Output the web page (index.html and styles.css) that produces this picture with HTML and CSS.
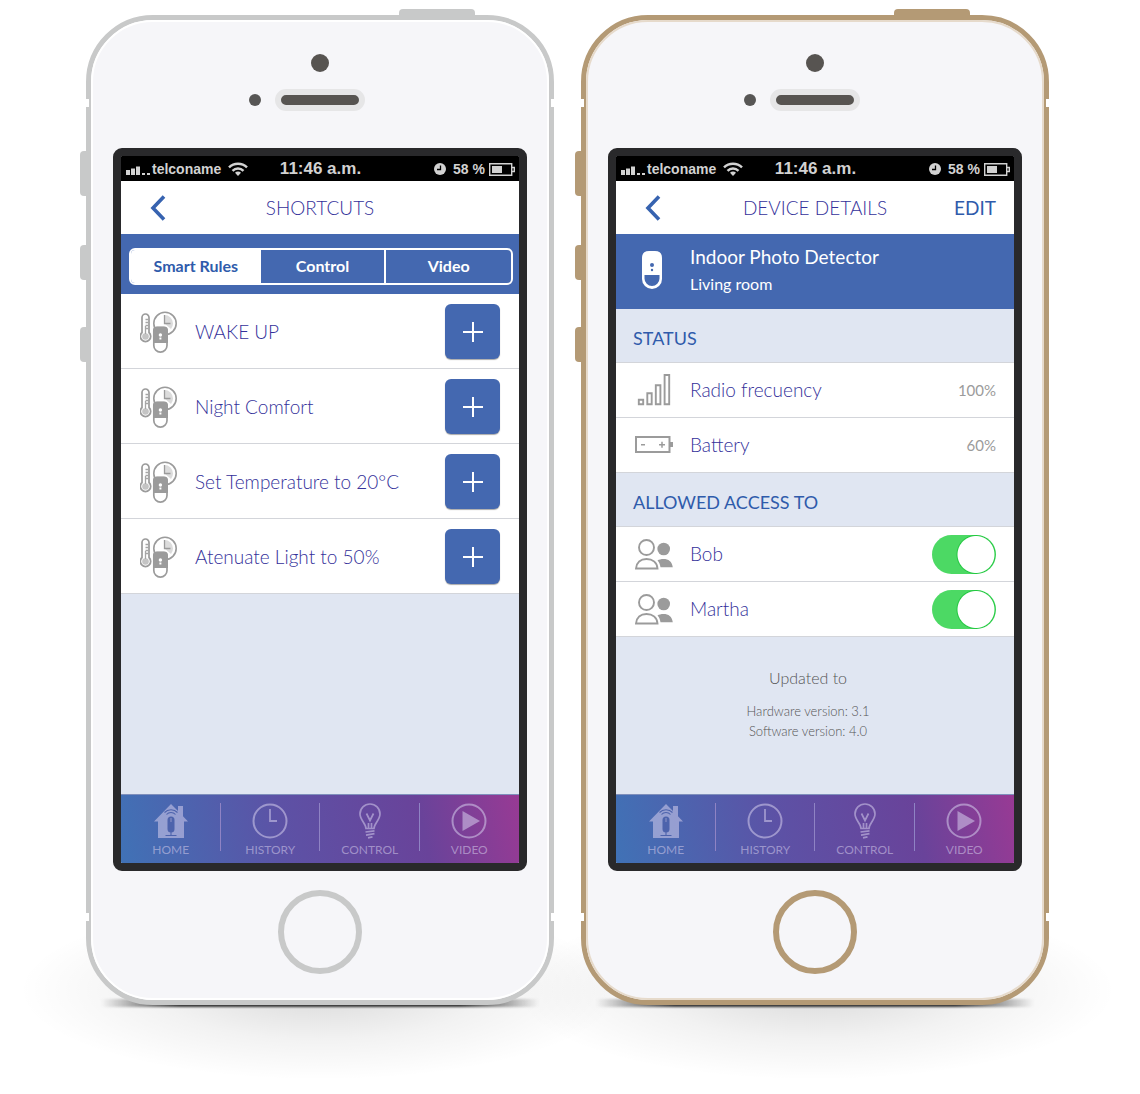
FILE: index.html
```html
<!DOCTYPE html>
<html lang="en">
<head>
<meta charset="utf-8">
<meta name="viewport" content="width=device-width, initial-scale=1">
<title>Smart home app</title>
<link rel="stylesheet" href="styles.css">
</head>
<body>
<svg class="sprite" width="0" height="0" aria-hidden="true">
  <symbol id="i-signal" viewBox="0 0 24 11">
    <path d="M0 6h4v5H0zM5 4.500h4V11H5zM10 2.500h4V11h-4zM16 9h3v2h-3zM21 9h3v2h-3z" fill="currentColor"/>
  </symbol>
  <symbol id="i-wifi" viewBox="0 0 20 14">
    <g fill="none" stroke="currentColor" stroke-width="2.500"><path d="M1 5.300a13 13 0 0 1 18 0"/><path d="M4.500 8.800a8 8 0 0 1 11 0"/></g>
    <path d="M10 14l-3-3.200a4.200 4.200 0 0 1 6 0z" fill="currentColor"/>
  </symbol>
  <symbol id="i-alarm" viewBox="0 0 12 12">
    <circle cx="6" cy="6" r="6" fill="currentColor"/><path d="M6.500 2.500v4H3" fill="none" stroke="#000" stroke-width="1.300"/>
  </symbol>
  <symbol id="i-charge" viewBox="0 0 26 13">
    <path d="M.7.700h22v11.600H.7zM23 4.500h2.300v4H23" fill="none" stroke="currentColor" stroke-width="1.400"/><path d="M3 3h10v7H3z" fill="currentColor"/>
  </symbol>
  <symbol id="i-back" viewBox="0 0 16 26">
    <path d="M14 1.500L3 13l11 11.500" fill="none" stroke="currentColor" stroke-width="3.600"/>
  </symbol>
  <symbol id="i-rule" viewBox="0 0 38 42">
    <circle cx="25" cy="12.500" r="11.200" fill="#fff" stroke="#9b9b9b" stroke-width="1.600"/>
    <path d="M24.500 4a8.500 8.500 0 0 1 8.500 8.500 8.500 8.500 0 0 1-2 5.500L24.500 12.500z" fill="#dcdcdc"/>
    <path d="M24.500 4v8.500h6" fill="none" stroke="#9b9b9b" stroke-width="1.300"/>
    <path d="M2 21.500V6.500a3.500 3.500 0 0 1 7 0v15a5.200 5.200 0 1 1-7 0z" fill="#fff" stroke="#9b9b9b" stroke-width="1.700"/>
    <circle cx="5.500" cy="25.500" r="3.300" fill="#c4c4c4"/>
    <path d="M5.500 23v-8M5.500 8.500h2.700M5.500 11.500h2.700M5.500 14.500h2.700M5.500 17.500h2.700" stroke="#a6a6a6" stroke-width="1.300"/>
    <path d="M13.800 34.500V20q0-3.500 3.500-3.500h6.200q3.500 0 3.500 3.500v14.500a6.600 6.600 0 0 1-13.200 0z" fill="#fff" stroke="#9b9b9b" stroke-width="1.700"/>
    <path d="M13 32V19.500Q13 15.500 17 15.500h7q4 0 4 4V32z" fill="#9b9b9b"/>
    <circle cx="20.400" cy="24" r="1.700" fill="#fff"/><path d="M19.400 26.500h2v2h-2z" fill="#fff"/>
  </symbol>
  <symbol id="i-detector" viewBox="0 0 20 38">
    <path d="M0 28V7q0-7 7-7h6q7 0 7 7v21a10 10 0 0 1-20 0z" fill="#fff"/>
    <path d="M2.500 24h15v3.500a7.500 7.500 0 0 1-15 0z" fill="#4468b0"/>
    <circle cx="10" cy="14" r="2" fill="#4468b0"/><circle cx="10" cy="19" r="1.200" fill="#4468b0"/>
  </symbol>
  <symbol id="i-radio" viewBox="0 0 38 32">
    <path d="M3.800 25.800h4.400v4.400H3.800zM12.300 19.300h4.400v10.900h-4.400zM20.800 11.300h4.600v18.900h-4.600zM29.600 1h4.600v29.200h-4.600z" fill="none" stroke="#9b9b9b" stroke-width="1.900"/>
  </symbol>
  <symbol id="i-battery" viewBox="0 0 38 18">
    <path d="M1 1h33.500v15H1z" fill="none" stroke="#9b9b9b" stroke-width="2"/><path d="M35 6h3v5h-3z" fill="#9b9b9b"/>
    <path d="M6 8.800h4M24 8.800h6M27 5.800v6" stroke="#9b9b9b" stroke-width="1.500"/>
  </symbol>
  <symbol id="i-users" viewBox="0 0 38 31">
    <g fill="none" stroke="#9b9b9b" stroke-width="1.900"><circle cx="11.500" cy="8.500" r="7.500"/><path d="M1 29.500c.5-6 4.500-9.500 10.500-9.500S22 23.500 22.500 29.500z"/></g>
    <circle cx="28.700" cy="10" r="6.300" fill="#9b9b9b"/><path d="M22.500 21.500c1.500-1 3.500-1.500 6-1.500 5 0 8.500 2.500 9.300 8.200H25.500c-.5-3-1.500-5-3-6.700z" fill="#9b9b9b"/>
  </symbol>
  <symbol id="i-home" viewBox="0 0 34 36">
    <path d="M17 1L0 18.500h4V35h26V18.500h4l-5-5.200V3h-5v5z" fill="currentColor"/>
    <g fill="none" stroke="#4d63ac" stroke-width="1.100"><path d="M10.500 9.500a9 9 0 0 1 13 0M12.500 11.500a6 6 0 0 1 9 0"/><path d="M11.500 32.500h11M17 29v3"/></g>
    <path d="M13.500 17a3.500 3.500 0 0 1 7 0v9a3.500 3.500 0 0 1-7 0z" fill="#4d63ac"/><path d="M16.500 15h1v4h-1z" fill="#8f95c8"/>
  </symbol>
  <symbol id="i-history" viewBox="0 0 36 36">
    <circle cx="18" cy="18" r="16.500" fill="none" stroke="currentColor" stroke-width="2"/><path d="M18 6v12h7" fill="none" stroke="currentColor" stroke-width="1.800"/>
  </symbol>
  <symbol id="i-bulb" viewBox="0 0 22 36">
    <path d="M7 25.500c0-5-6-8.500-6-14.500a10 10 0 0 1 20 0c0 6-6 9.500-6 14.500zM7.500 10.500l3.500 7 3.500-7M9.500 25v-5M12.500 25v-5M6.500 29l9-1.200M7 32.200l8.500-1.500M9 34.800l4.500-1" fill="none" stroke="currentColor" stroke-width="1.700"/>
  </symbol>
  <symbol id="i-video" viewBox="0 0 36 36">
    <circle cx="18" cy="18" r="16.500" fill="none" stroke="currentColor" stroke-width="2"/><path d="M11.500 8v20L29 18z" fill="currentColor"/>
  </symbol>
</svg>

<main class="stage">
  <section class="phone phone-silver" aria-label="Shortcuts screen">
    <i class="key key-power"></i><i class="key key-mute"></i><i class="key key-up"></i><i class="key key-down"></i>
    <i class="band band-top"></i><i class="band band-bottom"></i>
    <div class="face">
      <div class="camera"></div>
      <div class="earpiece"><span class="sensor"></span><span class="speaker"></span></div>
      <div class="screen">
        <div class="statusbar">
          <div class="carrier"><svg class="ic-signal"><use href="#i-signal"/></svg><span>telconame</span><svg class="ic-wifi"><use href="#i-wifi"/></svg></div>
          <div class="time">11:46 a.m.</div>
          <div class="power"><svg class="ic-alarm"><use href="#i-alarm"/></svg><span>58 %</span><svg class="ic-charge"><use href="#i-charge"/></svg></div>
        </div>
        <header class="titlebar">
          <button class="back" type="button" aria-label="Back"><svg><use href="#i-back"/></svg></button>
          <h1>SHORTCUTS</h1>
        </header>
        <div class="segments">
          <div class="segment-group">
            <button class="segment active" type="button">Smart Rules</button>
            <button class="segment" type="button">Control</button>
            <button class="segment" type="button">Video</button>
          </div>
        </div>
        <div class="content">
          <ul class="list">
            <li class="row rule"><svg class="ic-rule"><use href="#i-rule"/></svg><span class="name">WAKE UP</span><button class="add" type="button" aria-label="Add WAKE UP"></button></li>
            <li class="row rule"><svg class="ic-rule"><use href="#i-rule"/></svg><span class="name">Night Comfort</span><button class="add" type="button" aria-label="Add Night Comfort"></button></li>
            <li class="row rule"><svg class="ic-rule"><use href="#i-rule"/></svg><span class="name">Set Temperature to 20°C</span><button class="add" type="button" aria-label="Add Set Temperature"></button></li>
            <li class="row rule"><svg class="ic-rule"><use href="#i-rule"/></svg><span class="name">Atenuate Light to 50%</span><button class="add" type="button" aria-label="Add Atenuate Light"></button></li>
          </ul>
        </div>
        <nav class="tabbar">
          <a href="#home"><svg><use href="#i-home"/></svg>HOME</a>
          <a href="#history"><svg><use href="#i-history"/></svg>HISTORY</a>
          <a href="#control"><svg><use href="#i-bulb"/></svg>CONTROL</a>
          <a href="#video"><svg><use href="#i-video"/></svg>VIDEO</a>
        </nav>
      </div>
      <button class="home-button" type="button" aria-label="Home button"></button>
    </div>
  </section>

  <section class="phone phone-gold" aria-label="Device details screen">
    <i class="key key-power"></i><i class="key key-mute"></i><i class="key key-up"></i><i class="key key-down"></i>
    <i class="band band-top"></i><i class="band band-bottom"></i>
    <div class="face">
      <div class="camera"></div>
      <div class="earpiece"><span class="sensor"></span><span class="speaker"></span></div>
      <div class="screen">
        <div class="statusbar">
          <div class="carrier"><svg class="ic-signal"><use href="#i-signal"/></svg><span>telconame</span><svg class="ic-wifi"><use href="#i-wifi"/></svg></div>
          <div class="time">11:46 a.m.</div>
          <div class="power"><svg class="ic-alarm"><use href="#i-alarm"/></svg><span>58 %</span><svg class="ic-charge"><use href="#i-charge"/></svg></div>
        </div>
        <header class="titlebar">
          <button class="back" type="button" aria-label="Back"><svg><use href="#i-back"/></svg></button>
          <h1>DEVICE DETAILS</h1>
          <button class="edit" type="button">EDIT</button>
        </header>
        <div class="device">
          <svg class="ic-detector"><use href="#i-detector"/></svg>
          <div><h2>Indoor Photo Detector</h2><p>Living room</p></div>
        </div>
        <div class="content">
          <h3 class="section">STATUS</h3>
          <ul class="list">
            <li class="row"><svg class="ic-radio"><use href="#i-radio"/></svg><span class="name">Radio frecuency</span><span class="value">100%</span></li>
            <li class="row"><svg class="ic-battery"><use href="#i-battery"/></svg><span class="name">Battery</span><span class="value">60%</span></li>
          </ul>
          <h3 class="section">ALLOWED ACCESS TO</h3>
          <ul class="list">
            <li class="row"><svg class="ic-users"><use href="#i-users"/></svg><label class="name" for="bob">Bob</label><input class="toggle" type="checkbox" role="switch" id="bob" checked></li>
            <li class="row"><svg class="ic-users"><use href="#i-users"/></svg><label class="name" for="martha">Martha</label><input class="toggle" type="checkbox" role="switch" id="martha" checked></li>
          </ul>
          <div class="versions">
            <p class="updated">Updated to</p>
            <p>Hardware version: 3.1</p>
            <p>Software version: 4.0</p>
          </div>
        </div>
        <nav class="tabbar">
          <a href="#home"><svg><use href="#i-home"/></svg>HOME</a>
          <a href="#history"><svg><use href="#i-history"/></svg>HISTORY</a>
          <a href="#control"><svg><use href="#i-bulb"/></svg>CONTROL</a>
          <a href="#video"><svg><use href="#i-video"/></svg>VIDEO</a>
        </nav>
      </div>
      <button class="home-button" type="button" aria-label="Home button"></button>
    </div>
  </section>
</main>
</body>
</html>
```
FILE: styles.css
```css
:root {
  --blue: #4468b0;
  --link: #2f5bab;
  --ink: #34319a;
  --grey: #9b9b9b;
  --pale: #e0e6f2;
  --line: #d3d5da;
}

* { box-sizing: border-box; }

body {
  margin: 0;
  background: #fff;
  font-family: Lato, "Open Sans", sans-serif;
  font-weight: 300;
}

h1, h2, h3, p, ul { margin: 0; padding: 0; font-weight: 300; }
ul { list-style: none; }
button { padding: 0; border: 0; background: none; font: inherit; cursor: pointer; }
.sprite { position: absolute; }

.stage {
  display: grid;
  grid-template-columns: 1fr 1fr;
  gap: 27px;
  max-width: 1140px;
  margin: 0 auto;
  padding: 15px 91px 90px 86px;
  isolation: isolate;
  overflow: hidden;
}

/* Phone body */
.phone {
  position: relative;
  border: 5px solid var(--metal);
  border-radius: 67px;
  background: #f6f6f9;
}
.phone-silver { --metal: #c8c9c9; --rim: #fff; }
.phone-gold { --metal: #b49a75; --rim: #e6dacb; }

.phone::before,
.phone::after {
  content: "";
  position: absolute;
  z-index: -1;
}
.phone::before {
  left: -72px;
  right: -72px;
  bottom: -80px;
  height: 180px;
  background: radial-gradient(closest-side, rgba(0, 0, 0, .15), rgba(0, 0, 0, .05) 55%, transparent);
}
.phone::after {
  left: 10px;
  right: 10px;
  bottom: -7px;
  height: 8px;
  background: linear-gradient(90deg, transparent, #333 18%, #333 82%, transparent);
  filter: blur(1px);
}

.face {
  display: flex;
  flex-direction: column;
  align-items: center;
  height: 100%;
  padding: 32px 20px 24px;
  border: 2px solid var(--rim);
  border-radius: 62px;
}

.key { position: absolute; background: var(--metal); }
.key-power { top: -11px; right: 74px; width: 76px; height: 7px; border-radius: 4px 4px 0 0; }
.key-mute, .key-up, .key-down { left: -11px; width: 7px; height: 35px; border-radius: 4px 0 0 4px; }
.key-mute { top: 131px; height: 45px; }
.key-up { top: 225px; }
.key-down { top: 307px; }

.band {
  position: absolute;
  left: -5px;
  right: -5px;
  height: 8px;
  border: solid #fff;
  border-width: 0 3px;
}
.band-top { top: 79px; }
.band-bottom { bottom: 79px; }

.camera { width: 18px; height: 18px; border-radius: 50%; background: #575451; }
.earpiece {
  display: grid;
  grid-template-columns: 1fr 90px 1fr;
  align-items: center;
  align-self: stretch;
  margin: 17px 0 37px;
}
.sensor {
  justify-self: end;
  width: 12px;
  height: 12px;
  margin-right: 14px;
  border-radius: 50%;
  background: #575655;
}
.speaker { height: 22px; border: 6px solid #e6e6e7; border-radius: 11px; background: #575451; }

.home-button {
  width: 84px;
  height: 84px;
  margin-top: 19px;
  border: 6px solid var(--metal);
  border-radius: 50%;
}

/* Screen */
.screen {
  display: flex;
  flex: 1;
  flex-direction: column;
  align-self: stretch;
  overflow: hidden;
  border: 8px solid #29292b;
  border-radius: 9px;
}

.statusbar {
  display: grid;
  grid-template-columns: 1fr auto 1fr;
  align-items: center;
  height: 25px;
  padding: 1px 4px 0 5px;
  background: #000;
  color: #d2d2d2;
  font: bold 14px/24px "Liberation Sans", Arial, sans-serif;
}
.carrier, .power { display: flex; align-items: center; }
.carrier { gap: 2px; }
.power { justify-content: flex-end; gap: 4px; }
.time { font-size: 17px; }
.ic-signal { width: 24px; height: 11px; }
.ic-wifi { width: 20px; height: 14px; margin-left: 5px; }
.ic-alarm { width: 12px; height: 12px; margin-right: 3px; }
.ic-charge { width: 26px; height: 13px; }

.titlebar {
  display: grid;
  grid-template-columns: 74px 1fr 74px;
  align-items: center;
  height: 53px;
  background: #fff;
  color: var(--ink);
}
.titlebar h1 { font-size: 19px; line-height: 24px; text-align: center; }
.back { justify-self: center; height: 26px; color: #3763b0; }
.back svg { display: block; width: 16px; height: 26px; }
.edit { justify-self: end; margin-right: 18px; color: var(--link); font-size: 19px; font-weight: 400; line-height: 24px; }

.segments { padding: 14px 6px 9px 8px; background: var(--blue); }
.segment-group {
  display: grid;
  grid-template-columns: 131fr 125fr 128fr;
  height: 37px;
  overflow: hidden;
  border: 2px solid #fff;
  border-radius: 6px;
}
.segment { padding-bottom: 2px; color: #fff; font-size: 16px; font-weight: 700; }
.segment:last-child { border-left: 2px solid #fff; }
.segment.active { background: #fff; color: var(--link); }

.content { flex: 1; background: var(--pale); }

.row {
  display: grid;
  grid-template-columns: 38px 1fr auto;
  align-items: center;
  gap: 17px;
  height: 55px;
  padding: 0 18px 0 19px;
  border-bottom: 1px solid var(--line);
  background: #fff;
}
.rule { height: 75px; padding: 1px 19px 0; }
.name { color: var(--ink); font-size: 19px; line-height: 24px; }
.value { color: var(--grey); font-size: 15px; font-weight: 400; line-height: 24px; }

.add {
  display: grid;
  place-items: center;
  width: 55px;
  height: 55px;
  border-radius: 6px;
  background: var(--blue);
  box-shadow: 0 1px 1px #aaa;
}
.add::before {
  content: "";
  width: 20px;
  height: 20px;
  background: linear-gradient(#fff, #fff) center / 20px 2px no-repeat, linear-gradient(#fff, #fff) center / 2px 20px no-repeat;
}

.ic-rule { width: 38px; height: 42px; }
.ic-radio { width: 38px; height: 32px; }
.ic-battery { width: 38px; height: 18px; }
.ic-users { width: 38px; height: 31px; }
.ic-detector { justify-self: center; width: 20px; height: 38px; }

.device {
  display: grid;
  grid-template-columns: 38px 1fr;
  align-items: center;
  gap: 19px;
  height: 75px;
  padding: 0 17px 3px;
  background: var(--blue);
  color: #fff;
}
.device h2 { font-size: 19px; font-weight: 400; line-height: 28px; }
.device p { font-size: 16px; font-weight: 400; line-height: 26px; }

.section {
  height: 54px;
  padding: 3px 17px 0;
  border-bottom: 1px solid var(--line);
  color: var(--link);
  font-size: 18px;
  font-weight: 400;
  line-height: 52px;
}

.toggle {
  width: 64px;
  height: 39px;
  margin: 0;
  border-radius: 20px;
  appearance: none;
  background: radial-gradient(circle at 44px 50%, #fff 18px, #22c840 19px, transparent 20px), #4cd964;
  cursor: pointer;
}
.toggle:not(:checked) { background: radial-gradient(circle at 20px 50%, #fff 18px, transparent 19px), #c8c8cc; }

.versions { padding: 28px 14px 53px 0; color: #555; font-size: 13px; font-weight: 400; line-height: 20px; text-align: center; }
.versions .updated { margin-bottom: 10px; font-size: 16px; line-height: 26px; }

.tabbar {
  display: grid;
  grid-template-columns: repeat(4, 1fr);
  height: 69px;
  padding: 8px 0 4px;
  border-top: 1px solid #7f8fbc;
  background: linear-gradient(78deg, #4072b6, #5d51a5 42%, #69439a 75%, #983a94);
}
.tabbar a {
  display: flex;
  flex-direction: column;
  align-items: center;
  gap: 2px;
  color: rgba(214, 206, 236, .55);
  font-size: 12px;
  font-weight: 400;
  line-height: 18px;
  text-decoration: none;
  background: linear-gradient(#8f83c4, #8f83c4) right top / 1px 48px no-repeat;
}
.tabbar a:last-child { background: none; }
.tabbar svg { width: 36px; height: 36px; }

@media (max-width: 900px) {
  .stage { grid-template-columns: minmax(0, 468px); justify-content: center; padding-inline: 24px; row-gap: 80px; }
}
```
